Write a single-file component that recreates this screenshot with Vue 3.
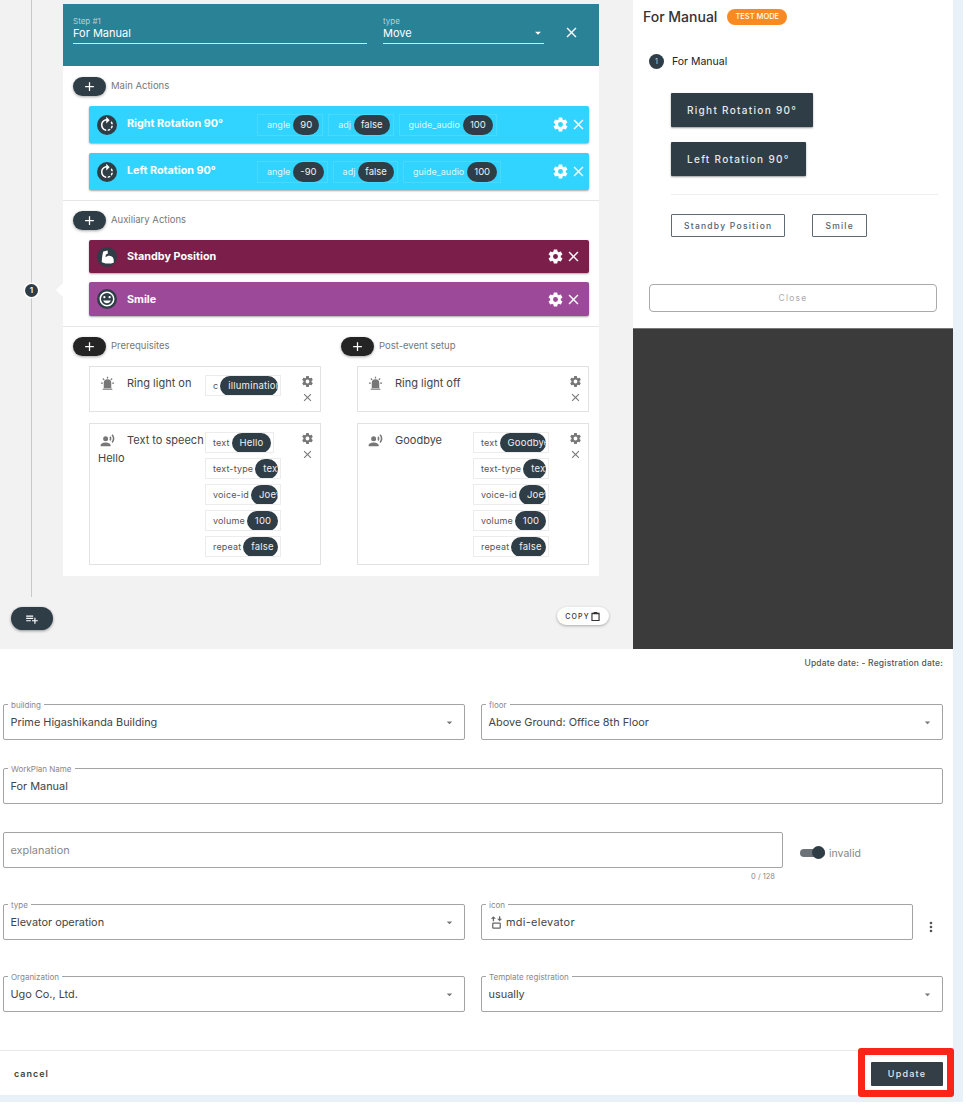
<script setup>
const p = {
  rotate: 'M16.89,15.5L18.31,16.89C19.21,15.73 19.76,14.39 19.93,13H17.91C17.77,13.87 17.43,14.72 16.89,15.5M13,17.9V19.92C14.39,19.75 15.74,19.21 16.9,18.31L15.46,16.87C14.71,17.41 13.87,17.76 13,17.9M19.93,11C19.76,9.61 19.21,8.27 18.31,7.11L16.89,8.53C17.43,9.28 17.77,10.13 17.91,11M15.55,5.55L11,1V4.07C7.06,4.56 4,7.92 4,12C4,16.08 7.05,19.44 11,19.93V17.91C8.16,17.43 6,14.97 6,12C6,9.03 8.16,6.57 11,6.09V10L15.55,5.55Z',
  arm: 'M7,4.5L11.5,3.5C12.4,3.3 13,4 13,4.8V7.5L10.5,8.5L10,12.2C11.5,10.8 13.4,10 15.4,10.2C18.6,10.5 21,12.8 21,16V19.5C18,20.6 14,21 10,20.5C7.6,20.2 6,19.6 5,18.8C5.2,14 5.6,9 7,4.5Z',
  smile: 'M12,2C6.47,2 2,6.5 2,12A10,10 0 0,0 12,22A10,10 0 0,0 22,12A10,10 0 0,0 12,2M12,20A8,8 0 0,1 4,12A8,8 0 0,1 12,4A8,8 0 0,1 20,12A8,8 0 0,1 12,20M8.5,11A1.5,1.5 0 0,0 10,9.5A1.5,1.5 0 0,0 8.5,8A1.5,1.5 0 0,0 7,9.5A1.5,1.5 0 0,0 8.5,11M15.5,11A1.5,1.5 0 0,0 17,9.5A1.5,1.5 0 0,0 15.5,8A1.5,1.5 0 0,0 14,9.5A1.5,1.5 0 0,0 15.5,11M12,17.5C14.33,17.5 16.3,16.04 17.11,14H6.89C7.69,16.04 9.67,17.5 12,17.5Z',
  cog: 'M12,15.5A3.5,3.5 0 0,1 8.5,12A3.5,3.5 0 0,1 12,8.5A3.5,3.5 0 0,1 15.5,12A3.5,3.5 0 0,1 12,15.5M19.43,12.97C19.47,12.65 19.5,12.33 19.5,12C19.5,11.67 19.47,11.34 19.43,11L21.54,9.37C21.73,9.22 21.78,8.95 21.66,8.73L19.66,5.27C19.54,5.05 19.27,4.96 19.05,5.05L16.56,6.05C16.04,5.66 15.5,5.32 14.87,5.07L14.5,2.42C14.46,2.18 14.25,2 14,2H10C9.75,2 9.54,2.18 9.5,2.42L9.13,5.07C8.5,5.32 7.96,5.66 7.44,6.05L4.95,5.05C4.73,4.96 4.46,5.05 4.34,5.27L2.34,8.73C2.21,8.95 2.27,9.22 2.46,9.37L4.57,11C4.53,11.34 4.5,11.67 4.5,12C4.5,12.33 4.53,12.65 4.57,12.97L2.46,14.63C2.27,14.78 2.21,15.05 2.34,15.27L4.34,18.73C4.46,18.95 4.73,19.03 4.95,18.95L7.44,17.94C7.96,18.34 8.5,18.68 9.13,18.93L9.5,21.58C9.54,21.82 9.75,22 10,22H14C14.25,22 14.46,21.82 14.5,21.58L14.87,18.93C15.5,18.67 16.04,18.34 16.56,17.94L19.05,18.95C19.27,19.03 19.54,18.95 19.66,18.73L21.66,15.27C21.78,15.05 21.73,14.78 21.54,14.63L19.43,12.97Z',
  close: 'M19,6.41L17.59,5L12,10.59L6.41,5L5,6.41L10.59,12L5,17.59L6.41,19L12,13.41L17.59,19L19,17.59L13.41,12L19,6.41Z',
  plus: 'M19,13H13V19H11V13H5V11H11V5H13V11H19V13Z',
  alarm: 'M6,6.9L3.87,4.78L5.28,3.37L7.4,5.5L6,6.9M13,1V4H11V1H13M20.13,4.78L18,6.9L16.6,5.5L18.72,3.37L20.13,4.78M4.5,10.5V12.5H1.5V10.5H4.5M19.5,10.5H22.5V12.5H19.5V10.5M6,20H18A2,2 0 0,1 20,22H4A2,2 0 0,1 6,20M12,5A6,6 0 0,1 18,11V19H6V11A6,6 0 0,1 12,5Z',
  voice: 'M9,5A4,4 0 0,1 13,9A4,4 0 0,1 9,13A4,4 0 0,1 5,9A4,4 0 0,1 9,5M9,15C11.67,15 17,16.34 17,19V21H1V19C1,16.34 6.33,15 9,15M16.76,5.36C18.78,7.56 18.78,10.61 16.76,12.63L15.08,10.94C15.92,9.76 15.92,8.23 15.08,7.05L16.76,5.36M20.07,2C24,6.05 23.97,12.11 20.07,16L18.44,14.37C21.21,11.19 21.21,6.65 18.44,3.63L20.07,2Z',
  playlist: 'M2,16H10V14H2M18,14V10H16V14H12V16H16V20H18V16H22V14M14,6H2V8H14M14,10H2V12H14V10Z',
  clip: 'M8,2H16V4H21V22H3V4H8V2M5.5,7V19.5H18.5V7H5.5Z',
  elevator: 'M7,2L11,6H8V10H6V6H3L7,2M17,10L13,6H16V2H18V6H21L17,10M7,12H17A2,2 0 0,1 19,14V20A2,2 0 0,1 17,22H7A2,2 0 0,1 5,20V14A2,2 0 0,1 7,12M7,14V20H17V14H7Z',
  dots: 'M12,16A2,2 0 0,1 14,18A2,2 0 0,1 12,20A2,2 0 0,1 10,18A2,2 0 0,1 12,16M12,10A2,2 0 0,1 14,12A2,2 0 0,1 12,14A2,2 0 0,1 10,12A2,2 0 0,1 12,10M12,4A2,2 0 0,1 14,6A2,2 0 0,1 12,8A2,2 0 0,1 10,6A2,2 0 0,1 12,4Z',
  down: 'M7,10L12,15L17,10H7Z'
}

const mainActions = [
  { name: 'Right Rotation 90°', params: [['angle', '90'], ['adj', 'false'], ['guide_audio', '100']] },
  { name: 'Left Rotation 90°', params: [['angle', '-90'], ['adj', 'false'], ['guide_audio', '100']] }
]

const ttsParams = (text) => [
  ['text', text],
  ['text-type', 'text'],
  ['voice-id', 'Joey'],
  ['volume', '100'],
  ['repeat', 'false']
]

const setup = [
  {
    title: 'Prerequisites',
    cards: [
      { icon: p.alarm, name: 'Ring light on', params: [['c', 'illumination']] },
      { icon: p.voice, name: 'Text to speech', sub: 'Hello', params: ttsParams('Hello') }
    ]
  },
  {
    title: 'Post-event setup',
    cards: [
      { icon: p.alarm, name: 'Ring light off', params: [] },
      { icon: p.voice, name: 'Goodbye', params: ttsParams('Goodbye') }
    ]
  }
]
</script>

<template>
  <div class="app">
    <div class="top">
      <div class="editor">
        <div class="line"></div>
        <div class="marker">1</div>
        <div class="notch"></div>

        <div class="card">
          <div class="step-head">
            <div class="head-field step-name">
              <label>Step #1</label>
              <div class="head-val">For Manual</div>
            </div>
            <div class="head-field step-type">
              <label>type</label>
              <div class="head-val">Move<svg viewBox="0 0 24 24"><path :d="p.down" /></svg></div>
            </div>
            <svg class="head-close" viewBox="0 0 24 24"><path :d="p.close" /></svg>
          </div>

          <section class="sec sec-main">
            <div class="sec-title">
              <button class="add"><svg viewBox="0 0 24 24"><path :d="p.plus" /></svg></button>
              <span>Main Actions</span>
            </div>
            <div v-for="a in mainActions" :key="a.name" class="bar bar-blue">
              <span class="bar-icon"><svg viewBox="0 0 24 24"><path :d="p.rotate" /></svg></span>
              <span class="bar-name fixed">{{ a.name }}</span>
              <div class="chips">
                <span v-for="c in a.params" :key="c[0]" class="bar-chip">
                  <span class="lbl">{{ c[0] }}</span><span class="pill">{{ c[1] }}</span>
                </span>
              </div>
              <svg class="cog" viewBox="0 0 24 24"><path :d="p.cog" /></svg>
              <svg class="x" viewBox="0 0 24 24"><path :d="p.close" /></svg>
            </div>
          </section>

          <section class="sec sec-aux">
            <div class="sec-title">
              <button class="add"><svg viewBox="0 0 24 24"><path :d="p.plus" /></svg></button>
              <span>Auxiliary Actions</span>
            </div>
            <div class="bar bar-wine">
              <span class="bar-icon"><svg viewBox="0 0 24 24"><path :d="p.arm" /></svg></span>
              <span class="bar-name">Standby Position</span>
              <svg class="cog" viewBox="0 0 24 24"><path :d="p.cog" /></svg>
              <svg class="x" viewBox="0 0 24 24"><path :d="p.close" /></svg>
            </div>
            <div class="bar bar-purple">
              <span class="bar-icon"><svg viewBox="0 0 24 24"><path :d="p.smile" /></svg></span>
              <span class="bar-name">Smile</span>
              <svg class="cog" viewBox="0 0 24 24"><path :d="p.cog" /></svg>
              <svg class="x" viewBox="0 0 24 24"><path :d="p.close" /></svg>
            </div>
          </section>

          <section class="setup">
            <div v-for="col in setup" :key="col.title" class="setup-col">
              <div class="sec-title">
                <button class="add add-black"><svg viewBox="0 0 24 24"><path :d="p.plus" /></svg></button>
                <span>{{ col.title }}</span>
              </div>
              <div v-for="c in col.cards" :key="c.name" class="s-card">
                <div class="s-left">
                  <div class="s-head">
                    <svg class="s-icon" viewBox="0 0 24 24"><path :d="c.icon" /></svg>
                    <span class="s-name">{{ c.name }}</span>
                  </div>
                  <div v-if="c.sub" class="s-sub">{{ c.sub }}</div>
                </div>
                <div class="s-chips">
                  <span v-for="x in c.params" :key="x[0]" class="s-chip">
                    <span class="lbl">{{ x[0] }}</span><span class="pill">{{ x[1] }}</span>
                  </span>
                </div>
                <div class="s-tools">
                  <svg viewBox="0 0 24 24"><path :d="p.cog" /></svg>
                  <svg viewBox="0 0 24 24"><path :d="p.close" /></svg>
                </div>
              </div>
            </div>
          </section>
        </div>

        <div class="editor-foot">
          <button class="fab"><svg viewBox="0 0 24 24"><path :d="p.playlist" /></svg></button>
          <button class="copy">COPY<svg viewBox="0 0 24 24"><path :d="p.clip" /></svg></button>
        </div>
      </div>

      <aside class="side">
        <div class="preview">
          <div class="pv-title">
            <span>For Manual</span>
            <span class="badge">TEST MODE</span>
          </div>
          <div class="pv-step"><span class="num">1</span>For Manual</div>
          <div class="pv-body">
            <button class="btn-dark">Right Rotation 90°</button>
            <button class="btn-dark">Left Rotation 90°</button>
            <hr />
            <div class="pv-outline">
              <button class="btn-line">Standby Position</button>
              <button class="btn-line">Smile</button>
            </div>
          </div>
          <button class="btn-close">Close</button>
        </div>
        <div class="dark"></div>
      </aside>
    </div>

    <div class="form">
      <div class="dates">Update date: - Registration date:</div>

      <div class="grid">
        <div class="field">
          <label>building</label>
          <span>Prime Higashikanda Building</span>
          <svg class="caret" viewBox="0 0 24 24"><path :d="p.down" /></svg>
        </div>
        <div class="field">
          <label>floor</label>
          <span>Above Ground: Office 8th Floor</span>
          <svg class="caret" viewBox="0 0 24 24"><path :d="p.down" /></svg>
        </div>
      </div>

      <div class="field wide">
        <label>WorkPlan Name</label>
        <span>For Manual</span>
      </div>

      <div class="explain">
        <div class="explain-col">
          <div class="field">
            <span class="ph">explanation</span>
          </div>
          <div class="count">0 / 128</div>
        </div>
        <div class="toggle"><span class="track"><i></i></span>invalid</div>
      </div>

      <div class="grid row-type">
        <div class="field">
          <label>type</label>
          <span>Elevator operation</span>
          <svg class="caret" viewBox="0 0 24 24"><path :d="p.down" /></svg>
        </div>
        <div class="icon-row">
          <div class="field">
            <label>icon</label>
            <svg class="elev" viewBox="0 0 24 24"><path :d="p.elevator" /></svg>
            <span>mdi-elevator</span>
          </div>
          <svg class="dots" viewBox="0 0 24 24"><path :d="p.dots" /></svg>
        </div>
      </div>

      <div class="grid row-org">
        <div class="field">
          <label>Organization</label>
          <span>Ugo Co., Ltd.</span>
          <svg class="caret" viewBox="0 0 24 24"><path :d="p.down" /></svg>
        </div>
        <div class="field">
          <label>Template registration</label>
          <span>usually</span>
          <svg class="caret" viewBox="0 0 24 24"><path :d="p.down" /></svg>
        </div>
      </div>

      <div class="foot">
        <button class="cancel">cancel</button>
        <button class="update">Update</button>
      </div>
    </div>

    <div class="highlight"></div>
  </div>
</template>

<style>
html, body {
  background: #fff;
}
</style>

<style scoped>
.app {
  position: relative;
  width: 963px;
  height: 1102px;
  padding: 0 10px 7px 0;
  box-sizing: border-box;
  background: #e9f1f8;
  font-family: Inter, "Open Sans", sans-serif;
  color: #3a3a3a;
  overflow: hidden;
}
button {
  font-family: inherit;
  border: none;
  padding: 0;
  cursor: pointer;
}
svg {
  display: block;
  fill: currentColor;
}

.top {
  display: flex;
  height: 649px;
}
.editor {
  position: relative;
  width: 633px;
  background: #f2f2f2;
  padding: 4px 0 0 63px;
  box-sizing: border-box;
}
.line {
  position: absolute;
  left: 31px;
  top: 0;
  width: 1px;
  height: 597px;
  background: #c9c9c9;
}
.marker {
  position: absolute;
  left: 25px;
  top: 284px;
  width: 13px;
  height: 13px;
  border-radius: 50%;
  background: #2f3d47;
  box-shadow: 0 0 0 1.5px #fff;
  color: #fff;
  font-size: 8px;
  font-weight: 600;
  line-height: 13px;
  text-align: center;
}
.notch {
  position: absolute;
  left: 56px;
  top: 283px;
  border-top: 7px solid transparent;
  border-bottom: 7px solid transparent;
  border-right: 7px solid #fff;
}
.card {
  width: 536px;
  height: 572px;
  background: #fff;
}
.step-head {
  display: flex;
  align-items: flex-start;
  height: 62px;
  padding: 12px 0 0 10px;
  box-sizing: border-box;
  background: #2a8296;
  color: #fff;
}
.head-field label {
  display: block;
  font-size: 8px;
  line-height: 10px;
  color: rgba(255, 255, 255, 0.65);
}
.head-val {
  display: flex;
  align-items: flex-start;
  justify-content: space-between;
  height: 17px;
  border-bottom: 1px solid rgba(255, 255, 255, 0.8);
  font-size: 11px;
  line-height: 14px;
}
.head-val svg {
  width: 14px;
  height: 14px;
  margin-right: -1px;
}
.step-name {
  width: 294px;
  margin-right: 16px;
}
.step-type {
  width: 161px;
}
.head-close {
  width: 17px;
  height: 17px;
  margin: 8px 0 0 19px;
}

.sec {
  border-bottom: 1px solid #e6e6e6;
  padding: 11px 10px 0;
}
.sec-main {
  height: 135px;
  box-sizing: border-box;
}
.sec-aux {
  height: 126px;
  box-sizing: border-box;
  padding-top: 10px;
}
.sec-title {
  display: flex;
  align-items: center;
  gap: 5px;
  height: 19px;
  font-size: 9.5px;
  color: #777;
}
.sec-title span {
  position: relative;
  top: -1px;
}
.add {
  display: flex;
  align-items: center;
  justify-content: center;
  width: 33px;
  height: 19px;
  border-radius: 10px;
  background: #2f3d47;
  color: #fff;
  box-shadow: 0 1px 3px rgba(0, 0, 0, 0.35);
}
.add svg {
  width: 15px;
  height: 15px;
}
.add-black {
  background: #242424;
}
.bar {
  display: flex;
  align-items: center;
  width: 500px;
  margin-left: 16px;
  padding-left: 8px;
  box-sizing: border-box;
  border-radius: 2px;
  color: #fff;
  box-shadow: 0 1px 2px rgba(0, 0, 0, 0.35);
}
.bar-blue {
  height: 37px;
  margin-top: 10px;
  padding-right: 2px;
  background: #30d4ff;
}
.bar-wine {
  height: 33px;
  margin-top: 10px;
  padding-right: 7px;
  background: #7c1e4a;
}
.bar-purple {
  height: 34px;
  margin-top: 9px;
  padding-right: 7px;
  background: #9d4999;
}
.bar-icon {
  display: flex;
  align-items: center;
  justify-content: center;
  flex: none;
  width: 20px;
  height: 20px;
  margin-right: 10px;
  border-radius: 50%;
  background: #2f3d47;
}
.bar-icon svg {
  width: 18px;
  height: 18px;
}
.bar-name {
  font-size: 10.8px;
  font-weight: 700;
  white-space: nowrap;
}
.bar-name.fixed {
  position: relative;
  top: -1px;
  width: 130px;
  flex: none;
}
.chips {
  display: flex;
  gap: 5px;
}
.bar-chip {
  display: flex;
  align-items: center;
  height: 20px;
  padding: 0 3px 0 9px;
  border: 1px solid rgba(255, 255, 255, 0.12);
  color: rgba(255, 255, 255, 0.85);
  font-size: 9px;
}
.bar-chip .pill {
  padding: 0 7px;
}
.lbl {
  flex: none;
  white-space: nowrap;
}
.pill {
  display: block;
  flex: 0 1 auto;
  min-width: 0;
  margin-left: 3px;
  padding: 0 8px;
  height: 20px;
  border-radius: 10px;
  background: #2f3d47;
  color: #f0f0f0;
  font-size: 9.5px;
  line-height: 20px;
  white-space: nowrap;
  overflow: hidden;
}
.cog {
  flex: none;
  width: 17px;
  height: 17px;
  margin-left: auto;
}
.x {
  flex: none;
  width: 17px;
  height: 17px;
  margin-left: 1px;
}

.setup {
  display: flex;
  padding: 10px 0 0 10px;
}
.setup-col {
  flex: none;
  width: 268px;
}
.setup-col .sec-title {
  margin-bottom: 10px;
}
.s-card {
  display: flex;
  width: 232px;
  margin: 0 0 11px 16px;
  padding: 8px 0 7px 8px;
  box-sizing: border-box;
  min-height: 46px;
  border: 1px solid #e2e2e2;
  background: #fff;
}
.s-left {
  flex: none;
  width: 107px;
}
.s-head {
  display: flex;
  align-items: flex-start;
}
.s-icon {
  flex: none;
  width: 15px;
  height: 15px;
  margin: 1px 12px 0 2px;
  color: #777;
}
.s-name {
  font-size: 11px;
  line-height: 17px;
  color: #444;
  white-space: nowrap;
}
.s-sub {
  margin-top: 1px;
  font-size: 11px;
  line-height: 17px;
  color: #444;
}
.s-chips {
  display: flex;
  flex-direction: column;
  align-items: flex-start;
  gap: 5px;
  width: 76px;
  flex: none;
}
.s-chip {
  display: flex;
  align-items: center;
  max-width: 76px;
  height: 21px;
  box-sizing: border-box;
  padding: 0 2px 0 7px;
  border: 1px solid #ececec;
  overflow: hidden;
  font-size: 9px;
  letter-spacing: 0.15px;
  color: #555;
}
.s-chip .pill {
  margin-left: 2px;
  letter-spacing: 0.2px;
}
.s-tools {
  flex: none;
  margin-left: 20px;
  color: #777;
}
.s-tools svg {
  width: 13px;
  height: 13px;
}
.s-tools svg:first-child {
  margin-bottom: 3px;
}

.editor-foot {
  display: flex;
  justify-content: space-between;
  align-items: flex-start;
  margin: 31px 24px 0 -52px;
}
.fab {
  display: flex;
  align-items: center;
  justify-content: center;
  width: 42px;
  height: 23px;
  border-radius: 12px;
  background: #2f3d47;
  color: #fff;
  box-shadow: 0 1px 3px rgba(0, 0, 0, 0.4);
}
.fab svg {
  width: 14px;
  height: 14px;
}
.copy {
  display: flex;
  align-items: center;
  justify-content: center;
  width: 52px;
  height: 18px;
  border-radius: 9px;
  background: #fff;
  color: #333;
  font-size: 7px;
  font-weight: 500;
  letter-spacing: 1.2px;
  box-shadow: 0 1px 3px rgba(0, 0, 0, 0.3);
}
.copy svg {
  width: 11px;
  height: 11px;
}

.side {
  width: 320px;
  display: flex;
  flex-direction: column;
}
.preview {
  height: 328px;
  box-sizing: border-box;
  padding: 8px 16px 0 16px;
  background: #fff;
}
.pv-title {
  display: flex;
  align-items: center;
  gap: 10px;
  margin-left: -6px;
  height: 17px;
  font-size: 14px;
  font-weight: 500;
  color: #333;
}
.badge {
  display: block;
  padding: 0 8px;
  border-radius: 8px;
  background: #f98a22;
  color: #fff;
  font-size: 7.5px;
  font-weight: 500;
  line-height: 16px;
}
.pv-step {
  display: flex;
  align-items: center;
  gap: 8px;
  margin-top: 29px;
  height: 15px;
  font-size: 10.5px;
  color: #222;
}
.num {
  width: 15px;
  height: 15px;
  border-radius: 50%;
  background: #2f3d47;
  color: #d8d8d8;
  font-size: 7px;
  line-height: 15px;
  text-align: center;
}
.pv-body {
  margin: 24px 0 0 22px;
}
.btn-dark {
  display: block;
  height: 34px;
  margin-bottom: 15px;
  padding: 0 16px;
  border-radius: 1px;
  background: #2f3d47;
  color: #e8e8e8;
  font-size: 10px;
  font-weight: 500;
  letter-spacing: 1.3px;
  box-shadow: 0 1px 2px rgba(0, 0, 0, 0.4);
}
hr {
  width: 267px;
  margin: 18px 0 19px;
  border: none;
  border-top: 1px solid #eee;
}
.pv-outline {
  display: flex;
  gap: 27px;
}
.btn-line {
  height: 23px;
  padding: 0 12px;
  border: 1px solid #5d6a74;
  border-radius: 1px;
  background: #fff;
  color: #55626c;
  font-size: 8.5px;
  font-weight: 500;
  letter-spacing: 1.25px;
}
.btn-close {
  display: block;
  width: 288px;
  height: 28px;
  margin-top: 47px;
  border: 1px solid #aaa;
  border-radius: 4px;
  background: #fff;
  color: #aaa;
  font-size: 8.5px;
  font-weight: 400;
  letter-spacing: 1.2px;
}
.dark {
  flex: 1;
  background: #3b3b3b;
  border-top: 1px solid #777;
}

.form {
  height: 446px;
  box-sizing: border-box;
  padding: 0 10px 0 3px;
  background: #fff;
}
.dates {
  height: 55px;
  padding-top: 9px;
  box-sizing: border-box;
  text-align: right;
  font-size: 8.5px;
  letter-spacing: 0.2px;
  font-weight: 500;
  color: #555;
}
.grid {
  display: grid;
  grid-template-columns: 462px 462px;
  gap: 16px;
}
.field {
  position: relative;
  display: flex;
  align-items: center;
  height: 36px;
  padding: 0 8px 0 6.5px;
  box-sizing: border-box;
  border: 1px solid #a3a3a3;
  border-radius: 2px;
  background: #fff;
  font-size: 10.9px;
  color: #444;
}
.field label {
  position: absolute;
  left: 4px;
  top: -5px;
  padding: 0 3px;
  background: #fff;
  font-size: 8px;
  line-height: 10px;
  color: #888;
}
.field .ph {
  color: #888;
}
.caret {
  width: 13px;
  height: 13px;
  margin-left: auto;
  color: #777;
}
.wide {
  margin-top: 28px;
}
.explain {
  display: flex;
  margin-top: 28px;
  height: 72px;
}
.explain-col {
  width: 780px;
}
.count {
  margin-top: 4px;
  padding-right: 8px;
  text-align: right;
  font-size: 7.5px;
  color: #888;
}
.toggle {
  display: flex;
  align-items: center;
  gap: 4px;
  height: 42px;
  margin-left: 17px;
  font-size: 10.5px;
  color: #888;
}
.track {
  position: relative;
  width: 25px;
  height: 8px;
  border-radius: 4px;
  background: #6b7278;
}
.track i {
  position: absolute;
  left: 12px;
  top: -3px;
  width: 13px;
  height: 13px;
  border-radius: 50%;
  background: #2f3d47;
}
.icon-row {
  display: flex;
}
.icon-row .field {
  width: 432px;
}
.elev {
  width: 15px;
  height: 15px;
  margin-right: 2.5px;
  color: #666;
}
.icon-row span {
  letter-spacing: 0.3px;
}
.dots {
  width: 16px;
  height: 16px;
  margin: 15px 0 0 10px;
  color: #555;
}
.row-org {
  margin-top: 36px;
}
.foot {
  display: flex;
  justify-content: space-between;
  align-items: center;
  height: 45px;
  margin: 38px -10px 0 -3px;
  padding: 0 10px 0 14px;
  border-top: 1px solid #e8e8e8;
}
.cancel {
  background: none;
  font-size: 9px;
  font-weight: 600;
  letter-spacing: 1px;
  color: #444;
}
.update {
  width: 72px;
  height: 24px;
  border-radius: 1px;
  background: #333e47;
  color: #e8e8e8;
  font-size: 9px;
  font-weight: 500;
  letter-spacing: 1.2px;
}
.highlight {
  position: absolute;
  left: 858px;
  top: 1048px;
  width: 96px;
  height: 49px;
  box-sizing: border-box;
  border: 7px solid #fb2419;
  border-radius: 3px;
}
</style>
